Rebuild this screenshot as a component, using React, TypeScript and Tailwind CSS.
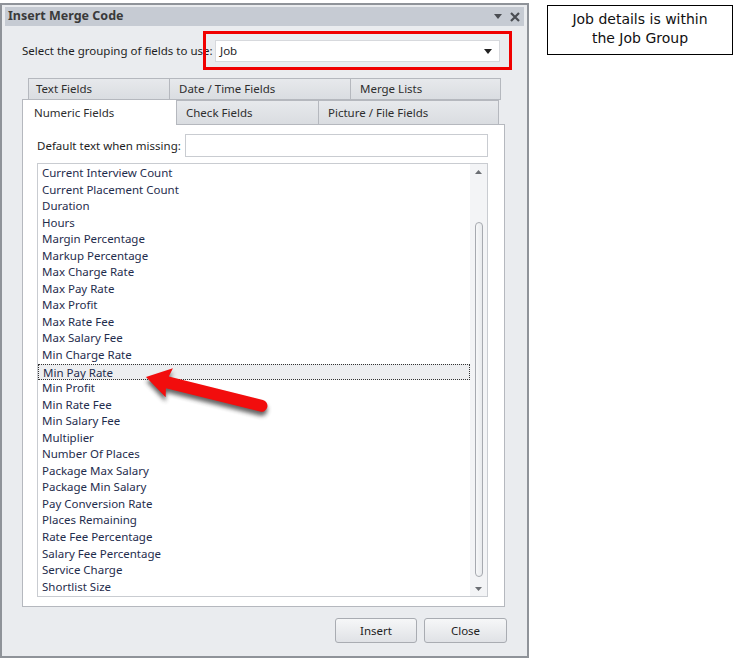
import React from 'react';

const fields = [
  'Current Interview Count',
  'Current Placement Count',
  'Duration',
  'Hours',
  'Margin Percentage',
  'Markup Percentage',
  'Max Charge Rate',
  'Max Pay Rate',
  'Max Profit',
  'Max Rate Fee',
  'Max Salary Fee',
  'Min Charge Rate',
  'Min Pay Rate',
  'Min Profit',
  'Min Rate Fee',
  'Min Salary Fee',
  'Multiplier',
  'Number Of Places',
  'Package Max Salary',
  'Package Min Salary',
  'Pay Conversion Rate',
  'Places Remaining',
  'Rate Fee Percentage',
  'Salary Fee Percentage',
  'Service Charge',
  'Shortlist Size',
];

const backTabs = [
  { name: 'Text Fields', w: 'w-[141px]', pl: 'pl-[7px]' },
  { name: 'Date / Time Fields', w: 'w-[181px]', pl: 'pl-[9px]' },
  { name: 'Merge Lists', w: 'w-[151px]', pl: 'pl-[9px]' },
];

const frontTabs = [
  { name: 'Check Fields', w: 'w-[142px]', pl: 'pl-[9px]' },
  { name: 'Picture / File Fields', w: 'w-[180px]', pl: 'pl-[9px]' },
];

const Caret = ({ className = '' }: { className?: string }) => (
  <svg width="8" height="5" viewBox="0 0 8 5" className={className}>
    <path d="M0 0 L8 0 L4 5 Z" fill="currentColor" />
  </svg>
);

const RedArrow = () => (
  <svg width="736" height="659" className="absolute left-0 top-0 pointer-events-none">
    <defs>
      <filter id="shadow" x="-20%" y="-50%" width="140%" height="200%">
        <feGaussianBlur stdDeviation="2" />
      </filter>
    </defs>
    <g transform="translate(146 377) rotate(14)">
      <path
        d="M0 0 L24 -15 L22 -6 L119 -6 A6 6 0 0 1 119 6 L22 6 L24 15 Z"
        fill="#333"
        opacity="0.75"
        filter="url(#shadow)"
        transform="translate(1 4)"
      />
      <path d="M0 0 L24 -15 L22 -6 L119 -6 A6 6 0 0 1 119 6 L22 6 L24 15 Z" fill="#f20d0d" />
    </g>
  </svg>
);

export default function App() {
  return (
    <div className="relative w-[736px] h-[659px] bg-white overflow-hidden font-['Noto_Sans',sans-serif] text-[11.5px] text-[#1e1e1e]">
      <div className="flex items-start">
        {/* Dialog */}
        <div className="mt-[3px] w-[529px] h-[655px] border-2 border-[#8f9399] bg-[#eaecef] px-[3px] pt-[2px] flex flex-col">
          <div className="h-[19px] bg-[#c6cbd3] flex items-center justify-between pl-[3px] pr-[4px]">
            <span className="font-bold text-[12.5px] text-[#3a3a3a] leading-none">Insert Merge Code</span>
            <div className="flex items-center gap-[8px] text-[#4a4d52]">
              <Caret />
              <svg width="10" height="10" viewBox="0 0 10 10">
                <path d="M1 1 L9 9 M9 1 L1 9" stroke="currentColor" strokeWidth="2.2" />
              </svg>
            </div>
          </div>

          {/* Grouping row */}
          <div className="relative mt-[14px] flex items-center h-[22px]">
            <span className="ml-[17px] w-[193px] whitespace-nowrap">Select the grouping of fields to use:</span>
            <div className="w-[285px] h-[22px] bg-white border border-[#d7d9dd] flex items-center justify-between pl-[4px] pr-[7px]">
              <span>Job</span>
              <Caret className="text-[#222]" />
            </div>
            <div className="absolute left-[198px] top-[-9px] w-[309px] h-[39px] border-[3px] border-[#f00000]" />
          </div>

          {/* Tabs */}
          <div className="mt-[16px] ml-[23px] flex h-[22px]">
            {backTabs.map((t) => (
              <div
                key={t.name}
                className={`${t.w} ${t.pl} h-[22px] border border-r-0 last:border-r border-[#b5b8be] bg-gradient-to-b from-[#e7e9ec] to-[#dadde1] flex items-center text-[#2e2e2e]`}
              >
                {t.name}
              </div>
            ))}
          </div>
          <div className="relative ml-[17px] w-[483px] flex h-[24px] z-10">
            <div className="w-[155px] h-[26px] -mt-[1px] bg-white border border-b-0 border-[#b5b8be] pl-[11px] flex items-center text-[#2e2e2e]">
              Numeric Fields
            </div>
            {frontTabs.map((t) => (
              <div
                key={t.name}
                className={`${t.w} ${t.pl} h-[24px] border border-l-0 border-b-0 border-[#b5b8be] bg-gradient-to-b from-[#e7e9ec] to-[#dadde1] flex items-center text-[#2e2e2e]`}
              >
                {t.name}
              </div>
            ))}
          </div>

          {/* Tab page */}
          <div className="ml-[17px] w-[483px] h-[483px] bg-white border border-[#b5b8be] pl-[14px] pt-[9px]">
            <div className="flex items-center h-[23px]">
              <span className="w-[148px] whitespace-nowrap">Default text when missing:</span>
              <div className="w-[303px] h-[23px] border border-[#c9ccd1] bg-white" />
            </div>
            <div className="mt-[6px] w-[451px] h-[434px] border border-[#c9ccd1] flex">
              <div className="flex-1 flex flex-col pt-[1px]">
                {fields.map((f) => (
                  <div
                    key={f}
                    className={`h-[16.56px] leading-[16.56px] pl-[4px] text-[#1f2d4d] whitespace-nowrap ${
                      f === 'Min Pay Rate' ? 'bg-[#edeef0] border border-dotted border-[#333] pl-[3px] leading-[14.5px]' : ''
                    }`}
                  >
                    {f}
                  </div>
                ))}
              </div>
              <div className="w-[17px] bg-[#f3f4f6] flex flex-col items-center pt-[6px] pb-[5px]">
                <svg width="7" height="4" viewBox="0 0 7 4" className="text-[#6b6e73]">
                  <path d="M0 4 L3.5 0 L7 4 Z" fill="currentColor" />
                </svg>
                <div className="mt-[48px] w-[8px] h-[355px] rounded-full border border-[#a7aab0] bg-gradient-to-r from-[#f7f8f9] to-[#e8eaed]" />
                <div className="flex-1" />
                <svg width="7" height="4" viewBox="0 0 7 4" className="text-[#6b6e73]">
                  <path d="M0 0 L7 0 L3.5 4 Z" fill="currentColor" />
                </svg>
              </div>
            </div>
          </div>

          {/* Buttons */}
          <div className="mt-[11px] flex justify-end gap-[7px] pr-[17px]">
            <button className="w-[82px] h-[25px] rounded-[3px] border border-[#a9acb2] bg-gradient-to-b from-[#f6f7f8] to-[#e0e2e6] text-[#222]">
              Insert
            </button>
            <button className="w-[83px] h-[25px] rounded-[3px] border border-[#a9acb2] bg-gradient-to-b from-[#f6f7f8] to-[#e0e2e6] text-[#222]">
              Close
            </button>
          </div>
        </div>

        {/* Annotation */}
        <div className="ml-[18px] mt-[5px] w-[186px] h-[50px] pb-[3px] border border-black flex items-center justify-center text-center font-['DejaVu_Sans',sans-serif] text-[14px] leading-[19px] text-[#111]">
          Job details is within
          <br />
          the Job Group
        </div>
      </div>
      <RedArrow />
    </div>
  );
}
